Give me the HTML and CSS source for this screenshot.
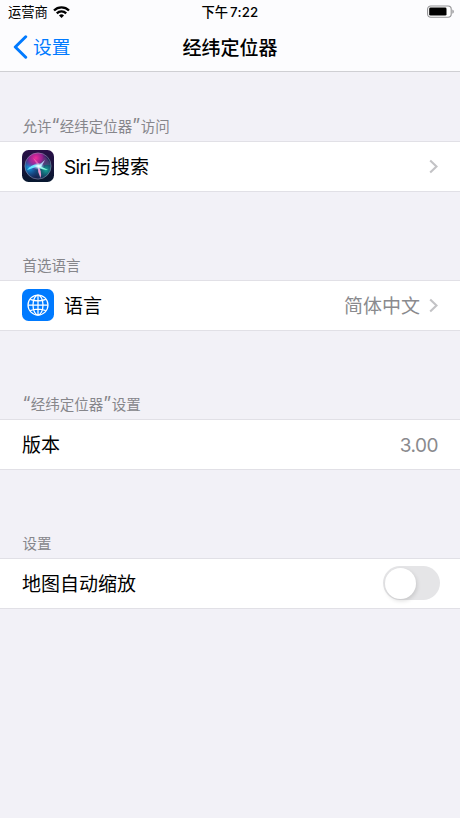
FILE: index.html
```
<!DOCTYPE html>
<html lang="zh-CN">
<head>
<meta charset="utf-8">
<title>经纬定位器</title>
<link rel="stylesheet" href="styles.css">
</head>
<body>
<header class="top">
  <div class="status">
    <div class="carrier"><span>运营商</span>
      <svg class="wifi" viewBox="0 0 17 12" width="17" height="12"><g fill="none" stroke="#000" stroke-width="2.3"><path d="M1 4.5a10.7 10.7 0 0 1 15 0"/><path d="M3.8 7.4a6.7 6.7 0 0 1 9.4 0"/></g><path d="M8.5 12 6 9.5a3.6 3.6 0 0 1 5 0Z"/></svg>
    </div>
    <div class="time">下午<span class="digits">7:22</span></div>
    <div class="power">
      <svg viewBox="0 0 28 14" width="28" height="14"><rect x=".6" y="1" width="23.6" height="11.2" rx="3.2" fill="#fff" stroke="#929295" stroke-width="1.1"/><rect x="2.2" y="2.6" width="17.3" height="8" rx="1.3"/><path d="M25.4 4.6v4.2q1.4-.6 1.4-2.1t-1.4-2.1Z" fill="#929295"/></svg>
    </div>
  </div>
  <nav class="nav">
    <a class="back"><svg viewBox="0 0 15 24" width="15" height="24"><path d="M12.7 1.8 2.3 12l10.4 10.2" fill="none" stroke="#007aff" stroke-width="3" stroke-linecap="round" stroke-linejoin="round"/></svg><span>设置</span></a>
    <h1>经纬定位器</h1>
    <span></span>
  </nav>
</header>
<main>
  <section class="group">
    <h2>允许<span class="quote">“</span>经纬定位器<span class="quote">”</span>访问</h2>
    <div class="row">
      <svg class="icon" viewBox="0 0 32 32" width="32" height="32">
        <defs>
          <linearGradient id="base" x1="0" y1="0" x2="0" y2="1"><stop stop-color="#2a1048"/><stop offset="1" stop-color="#07182f"/></linearGradient>
          <radialGradient id="pink" cx=".42" cy=".2" r=".48"><stop stop-color="#f02b9b"/><stop offset=".5" stop-color="#b321a0" stop-opacity=".8"/><stop offset="1" stop-color="#6f1c8c" stop-opacity="0"/></radialGradient>
          <radialGradient id="cyan" cx=".18" cy=".55" r=".45"><stop stop-color="#15a9ef"/><stop offset="1" stop-color="#1760b7" stop-opacity="0"/></radialGradient>
          <radialGradient id="teal" cx=".8" cy=".65" r=".45"><stop stop-color="#18a99b"/><stop offset="1" stop-color="#0a5373" stop-opacity="0"/></radialGradient>
          <radialGradient id="glow"><stop stop-color="#fff"/><stop offset=".35" stop-color="#c9ffff" stop-opacity=".8"/><stop offset="1" stop-color="#7cf" stop-opacity="0"/></radialGradient>
        </defs>
        <rect width="32" height="32" rx="6.5" fill="url(#base)"/>
        <circle cx="16" cy="16" r="13.2" fill="#172451"/>
        <circle cx="16" cy="16" r="13.2" fill="url(#cyan)"/>
        <circle cx="16" cy="16" r="13.2" fill="url(#teal)"/>
        <circle cx="16" cy="16" r="13.2" fill="url(#pink)"/>
        <path d="M16 15 23 7q5 4 5 8Z" fill="#68437f" opacity=".5"/>
        <path d="M17 16 5 20q6-7 12-5Z" fill="#63e9ff"/>
        <path d="m16 16-5-8q5 3 7 8Z" fill="#f569ba" opacity=".7"/>
        <path d="m16 16 7-6-4 7Z" fill="#b4cff5"/>
        <path d="m16 15 10 5q-6 0-10-3Z" fill="#8effdf"/>
        <path d="M15.5 15q5 6 3 13-3-6-3-13Z" fill="#f39bd5"/>
        <ellipse cx="16.5" cy="16.2" rx="6" ry="3.8" fill="url(#glow)"/>
        <circle cx="16" cy="16" r="13.1" fill="none" stroke="#a6a5bd" stroke-width=".8" opacity=".6"/>
      </svg>
      <span class="label"><span class="latin">Siri</span>与搜索</span>
      <svg class="chevron" viewBox="0 0 9 15" width="9" height="15"><path d="m1.2 1.4 6.3 6.1-6.3 6.1"/></svg>
    </div>
  </section>
  <section class="group">
    <h2>首选语言</h2>
    <div class="row">
      <svg class="icon" viewBox="0 0 32 32" width="32" height="32"><rect width="32" height="32" rx="6.5" fill="#007aff"/><g fill="none" stroke="#fff" stroke-width="1.25"><circle cx="16" cy="16" r="10"/><ellipse cx="16" cy="16" rx="5" ry="10"/><path d="M16 6v20M6 16h20M8.2 10.3q7.8 3 15.6 0M8.2 21.7q7.8-3 15.6 0"/></g></svg>
      <span class="label">语言</span>
      <span class="value">简体中文</span>
      <svg class="chevron" viewBox="0 0 9 15" width="9" height="15"><path d="m1.2 1.4 6.3 6.1-6.3 6.1"/></svg>
    </div>
  </section>
  <section class="group">
    <h2><span class="quote">“</span>经纬定位器<span class="quote">”</span>设置</h2>
    <div class="row"><span class="label">版本</span><span class="value number">3.00</span></div>
  </section>
  <section class="group">
    <h2>设置</h2>
    <div class="row"><span class="label">地图自动缩放</span><span class="switch"><span class="knob"></span></span></div>
  </section>
</main>
</body>
</html>
```

FILE: styles.css
```
* { box-sizing: border-box; }
body {
  margin: 0;
  min-height: 818px;
  background: #f2f1f7;
  color: #000;
  font-family: Inter, "Noto Sans CJK SC", sans-serif;
}
svg { display: block; flex: none; }
.top { height: 72px; background: #fcfcfe; border-bottom: 1px solid #cfcfd3; }
.status {
  height: 23px;
  display: grid;
  grid-template-columns: 1fr auto 1fr;
  align-items: center;
  padding: 0 5px 0 8px;
  font-size: 13.3px;
  line-height: 23px;
}
.carrier { display: flex; align-items: center; gap: 5px; }
.carrier span, .time { padding-top: 1px; }
.wifi { margin-top: -1px; }
.time { font-weight: 500; margin-right: 3px; }
.digits { margin-left: 2px; letter-spacing: .2px; }
.power { justify-self: end; }
.nav {
  height: 48px;
  display: grid;
  grid-template-columns: 1fr auto 1fr;
  align-items: center;
  padding: 0 13px;
}
.back { display: flex; align-items: center; gap: 5px; color: #007aff; font-size: 18.7px; line-height: 28px; }
.back span { padding-top: 1px; }
.nav h1 { margin: 0; padding-top: 3px; font-size: 19px; font-weight: 500; line-height: 28px; }
.group { padding-top: 43px; }
.group + .group { padding-top: 62.4px; }
.group h2 {
  margin: 0;
  height: 25.7px;
  padding-left: 22.5px;
  font-size: 14.5px;
  font-weight: 400;
  line-height: 23px;
  color: #86868b;
}
.quote { font-size: 18px; line-height: 1; letter-spacing: .4px; }
.row {
  height: 51px;
  display: flex;
  align-items: center;
  padding: 0 22px;
  background: #fff;
  border: solid #e1e0e6;
  border-width: 1px 0;
}
.icon { margin-right: 10px; }
.label { padding-top: 3px; font-size: 19px; line-height: 28px; }
.latin { margin-right: 2px; letter-spacing: -.7px; }
.value { margin-left: auto; padding-top: 3px; font-size: 19px; line-height: 28px; color: #8a8a8e; }
.number { letter-spacing: -.5px; }
.chevron { margin-left: auto; fill: none; stroke: #c3c3c6; stroke-width: 2.1; }
.value + .chevron { margin-left: 9px; }
.switch {
  margin: 0 -2px 0 auto;
  width: 57px;
  height: 34px;
  padding: 1.5px;
  border-radius: 17px;
  background: #e5e5e7;
}
.knob {
  display: block;
  width: 31px;
  height: 31px;
  border-radius: 50%;
  background: #fff;
  box-shadow: 1px 2px 4px #0002;
}
```
